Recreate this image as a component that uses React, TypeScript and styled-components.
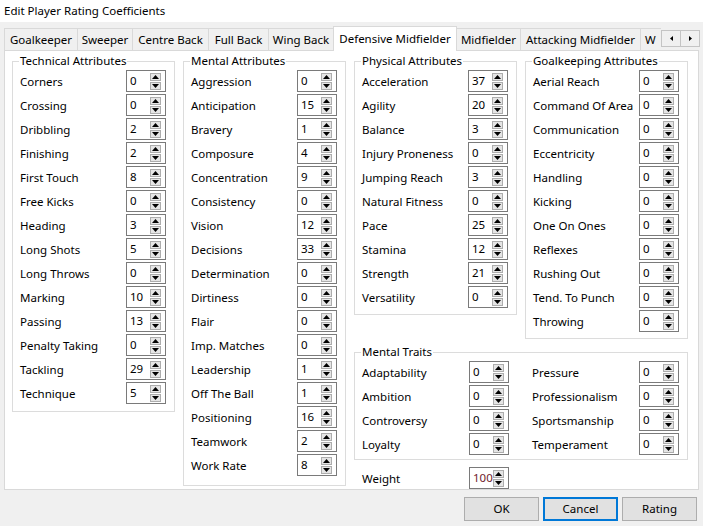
import React from "react";
import styled, { createGlobalStyle } from "styled-components";

const FONT = `"Noto Sans", "Open Sans", "Liberation Sans", sans-serif`;

const Global = createGlobalStyle`
  html, body { margin: 0; padding: 0; background: #f0f0f0; }
  body { font-family: ${FONT}; font-size: 11.5px; color: #000; }
  * { box-sizing: border-box; }
`;

const Window = styled.div`
  width: 703px;
  height: 526px;
  background: #f0f0f0;
  display: flex;
  flex-direction: column;
  overflow: hidden;
`;

const TitleBar = styled.div`
  height: 22px;
  background: #fff;
  padding: 0 0 2px 4px;
  display: flex;
  align-items: center;
  font-size: 11.5px;
  white-space: nowrap;
`;

const TabBar = styled.div`
  margin: 4px 0 -1px 4px;
  width: 696px;
  height: 25px;
  display: flex;
  align-items: flex-start;
  position: relative;
  z-index: 1;
`;

const TabStrip = styled.div`
  flex: 1;
  min-width: 0;
  height: 100%;
  display: flex;
  align-items: flex-end;
  overflow: hidden;
`;

const Tab = styled.div<{ $w: number; $active?: boolean }>`
  flex-shrink: 0;
  width: ${(p) => p.$w}px;
  height: ${(p) => (p.$active ? 25 : 23)}px;
  margin-left: -1px;
  &:first-child { margin-left: 0; }
  border: 1px solid #d9d9d9;
  border-bottom: ${(p) => (p.$active ? "none" : "1px solid #d9d9d9")};
  background: ${(p) => (p.$active ? "#fff" : "#f0f0f0")};
  position: relative;
  z-index: ${(p) => (p.$active ? 2 : 1)};
  display: flex;
  align-items: center;
  justify-content: center;
  padding: ${(p) => (p.$active ? "0 0 2px 0" : "0")};
  white-space: nowrap;
  overflow: hidden;
`;

const ClippedTab = styled(Tab)`
  justify-content: flex-start;
  padding-left: 4px;
`;

const ScrollButtons = styled.div`
  display: flex;
  margin-top: 4px;
`;

const ScrollButton = styled.div`
  width: 20px;
  height: 17px;
  margin-left: -1px;
  &:first-child { margin-left: 0; }
  border: 1px solid #c4c4c4;
  background: #f0f0f0;
  display: flex;
  align-items: center;
  justify-content: center;
`;

const Panel = styled.div`
  margin-left: 4px;
  width: 695px;
  height: 440px;
  background: #fff;
  border: 1px solid #d9d9d9;
  padding: 3px 0 0 7px;
  display: flex;
  gap: 8px;
  align-items: flex-start;
`;

const Column = styled.div`
  display: flex;
  flex-direction: column;
`;

const Pair = styled.div`
  display: flex;
  gap: 8px;
  align-items: flex-start;
`;

const Group = styled.fieldset<{ $w?: number; $pb?: number; $mt?: number }>`
  margin: ${(p) => p.$mt ?? 0}px 0 0 0;
  width: ${(p) => p.$w ?? 163}px;
  min-width: 0;
  border: 1px solid #dcdcdc;
  padding: 2px 8px ${(p) => p.$pb ?? 7}px 7px;
`;

const Legend = styled.legend`
  padding: 0 1px;
  margin-left: -1px;
  line-height: 14px;
  font-size: 11.5px;
  white-space: nowrap;
`;

const RowList = styled.div`
  display: flex;
  flex-direction: column;
  gap: 2px;
`;

const TraitGrid = styled.div`
  display: grid;
  grid-template-columns: 147px 147px;
  column-gap: 23px;
  row-gap: 2px;
`;

const Row = styled.div`
  height: 22px;
  display: flex;
  align-items: center;
  justify-content: space-between;
`;

const Label = styled.span`
  white-space: nowrap;
`;

const WeightRow = styled(Row)`
  margin-top: 7px;
  width: 155px;
  padding-left: 8px;
`;

const SpinBox = styled.div`
  width: 40px;
  height: 22px;
  flex-shrink: 0;
  border: 1px solid #7a7a7a;
  background: #fff;
  display: flex;
  align-items: center;
  padding-left: 3px;
`;

const SpinValue = styled.span<{ $color?: string }>`
  flex: 1;
  color: ${(p) => p.$color ?? "#000"};
  padding-bottom: 1px;
`;

const SpinArrows = styled.div`
  display: flex;
  flex-direction: column;
  gap: 1px;
  margin-right: 4px;
`;

const SpinArrow = styled.div`
  width: 11px;
  height: 8px;
  border: 1px solid #adadad;
  background: #e5e5e5;
  display: flex;
  align-items: center;
  justify-content: center;
`;

const ButtonBar = styled.div`
  margin-top: 7px;
  padding-right: 6px;
  display: flex;
  justify-content: flex-end;
  gap: 4px;
`;

const Button = styled.div<{ $default?: boolean }>`
  width: 75px;
  height: 24px;
  background: #e1e1e1;
  border: ${(p) => (p.$default ? "2px solid #0078d7" : "1px solid #adadad")};
  display: flex;
  align-items: center;
  justify-content: center;
  font-size: 11.5px;
  padding-bottom: 1px;
`;

const Tri = ({ dir }: { dir: "up" | "down" | "left" | "right" }) => {
  if (dir === "up")
    return (
      <svg width="7" height="4" viewBox="0 0 7 4">
        <polygon points="0,4 3.5,0 7,4" fill="#000" />
      </svg>
    );
  if (dir === "down")
    return (
      <svg width="7" height="4" viewBox="0 0 7 4">
        <polygon points="0,0 7,0 3.5,4" fill="#000" />
      </svg>
    );
  if (dir === "left")
    return (
      <svg width="3" height="5" viewBox="0 0 3 5">
        <polygon points="3,0 3,5 0,2.5" fill="#000" />
      </svg>
    );
  return (
    <svg width="3" height="5" viewBox="0 0 3 5">
      <polygon points="0,0 0,5 3,2.5" fill="#000" />
    </svg>
  );
};

const Spin = ({ value, color }: { value: number; color?: string }) => (
  <SpinBox>
    <SpinValue $color={color}>{value}</SpinValue>
    <SpinArrows>
      <SpinArrow>
        <Tri dir="up" />
      </SpinArrow>
      <SpinArrow>
        <Tri dir="down" />
      </SpinArrow>
    </SpinArrows>
  </SpinBox>
);

type Item = [string, number];

const technical: Item[] = [
  ["Corners", 0],
  ["Crossing", 0],
  ["Dribbling", 2],
  ["Finishing", 2],
  ["First Touch", 8],
  ["Free Kicks", 0],
  ["Heading", 3],
  ["Long Shots", 5],
  ["Long Throws", 0],
  ["Marking", 10],
  ["Passing", 13],
  ["Penalty Taking", 0],
  ["Tackling", 29],
  ["Technique", 5],
];

const mental: Item[] = [
  ["Aggression", 0],
  ["Anticipation", 15],
  ["Bravery", 1],
  ["Composure", 4],
  ["Concentration", 9],
  ["Consistency", 0],
  ["Vision", 12],
  ["Decisions", 33],
  ["Determination", 0],
  ["Dirtiness", 0],
  ["Flair", 0],
  ["Imp. Matches", 0],
  ["Leadership", 1],
  ["Off The Ball", 1],
  ["Positioning", 16],
  ["Teamwork", 2],
  ["Work Rate", 8],
];

const physical: Item[] = [
  ["Acceleration", 37],
  ["Agility", 20],
  ["Balance", 3],
  ["Injury Proneness", 0],
  ["Jumping Reach", 3],
  ["Natural Fitness", 0],
  ["Pace", 25],
  ["Stamina", 12],
  ["Strength", 21],
  ["Versatility", 0],
];

const goalkeeping: Item[] = [
  ["Aerial Reach", 0],
  ["Command Of Area", 0],
  ["Communication", 0],
  ["Eccentricity", 0],
  ["Handling", 0],
  ["Kicking", 0],
  ["One On Ones", 0],
  ["Reflexes", 0],
  ["Rushing Out", 0],
  ["Tend. To Punch", 0],
  ["Throwing", 0],
];

const traits: Item[] = [
  ["Adaptability", 0],
  ["Pressure", 0],
  ["Ambition", 0],
  ["Professionalism", 0],
  ["Controversy", 0],
  ["Sportsmanship", 0],
  ["Loyalty", 0],
  ["Temperament", 0],
];

const tabs: { name: string; w: number; active?: boolean }[] = [
  { name: "Goalkeeper", w: 74 },
  { name: "Sweeper", w: 56 },
  { name: "Centre Back", w: 77 },
  { name: "Full Back", w: 61 },
  { name: "Wing Back", w: 66 },
  { name: "Defensive Midfielder", w: 124, active: true },
  { name: "Midfielder", w: 65 },
  { name: "Attacking Midfielder", w: 121 },
];

const AttrRows = ({ items }: { items: Item[] }) => (
  <RowList>
    {items.map(([label, v]) => (
      <Row key={label}>
        <Label>{label}</Label>
        <Spin value={v} />
      </Row>
    ))}
  </RowList>
);

export default function App() {
  return (
    <Window>
      <Global />
      <TitleBar>Edit Player Rating Coefficients</TitleBar>
      <TabBar>
        <TabStrip>
          {tabs.map((t) => (
            <Tab key={t.name} $w={t.w} $active={t.active}>
              {t.name}
            </Tab>
          ))}
          <ClippedTab $w={60}>W</ClippedTab>
        </TabStrip>
        <ScrollButtons>
          <ScrollButton>
            <Tri dir="left" />
          </ScrollButton>
          <ScrollButton>
            <Tri dir="right" />
          </ScrollButton>
        </ScrollButtons>
      </TabBar>
      <Panel>
        <Group>
          <Legend>Technical Attributes</Legend>
          <AttrRows items={technical} />
        </Group>
        <Group $pb={9}>
          <Legend>Mental Attributes</Legend>
          <AttrRows items={mental} />
        </Group>
        <Column>
          <Pair>
            <Group $pb={6}>
              <Legend>Physical Attributes</Legend>
              <AttrRows items={physical} />
            </Group>
            <Group $pb={6}>
              <Legend>Goalkeeping Attributes</Legend>
              <AttrRows items={goalkeeping} />
            </Group>
          </Pair>
          <Group $w={334} $pb={4} $mt={6}>
            <Legend>Mental Traits</Legend>
            <TraitGrid>
              {traits.map(([label, v]) => (
                <Row key={label}>
                  <Label>{label}</Label>
                  <Spin value={v} />
                </Row>
              ))}
            </TraitGrid>
          </Group>
          <WeightRow>
            <Label>Weight</Label>
            <Spin value={100} color="#701c2c" />
          </WeightRow>
        </Column>
      </Panel>
      <ButtonBar>
        <Button>OK</Button>
        <Button $default>Cancel</Button>
        <Button>Rating</Button>
      </ButtonBar>
    </Window>
  );
}
